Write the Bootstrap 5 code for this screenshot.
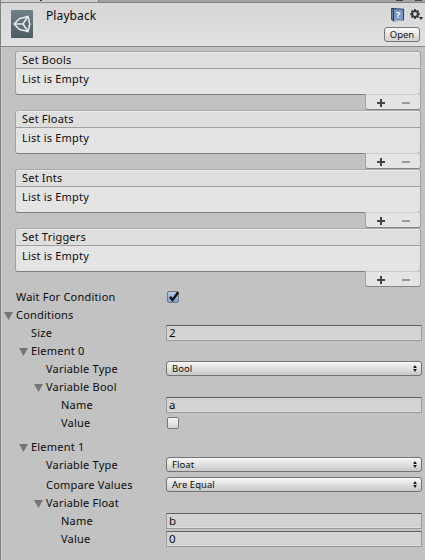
<!DOCTYPE html>
<html lang="en">
<head>
<meta charset="utf-8">
<title>Playback</title>
<link href="https://cdn.jsdelivr.net/npm/bootstrap@5.3.0/dist/css/bootstrap.min.css" rel="stylesheet">
<style>
body{background:#c2c2c2;color:#0c0c0c;font:11px/18px "Noto Sans","Open Sans",sans-serif;letter-spacing:.2px;width:425px;height:560px;overflow:hidden}
.inspector{height:560px;border-left:1px solid #828282;box-shadow:inset 1px 0 #cfcfcf}
.tabstrip{height:3px;background:#a2a2a2;border-bottom:1px solid #858585}
.tab-on{width:98px;height:2px;background:#ccc;border-right:1px solid #777}
.tab-on i{width:2px;height:1px;background:#333;margin-left:39px}
.tabstrip .tick{width:7px;height:1px;background:#444}
.tabstrip .tick+.tick{margin:0 3px 0 12px}
.asset-head{height:44px;background:linear-gradient(#d7d7d7,#e0e0e0);border-bottom:1px solid #8a8a8a}
.asset-icon{margin:7px 0 0 10px}
.asset-name{font-size:12px;margin:4px 0 0 13px;letter-spacing:.1px}
.tools{padding:5px 5px 0 0}
.tool-icons{height:17px;margin:0 -3px 2px 0}
.open-btn{width:36px;height:15px;border:1px solid #777;border-radius:3px;background:linear-gradient(#fafafa,#d0d0d0);font-size:9.5px;line-height:13px;letter-spacing:0;color:#111}
.lists{padding:4px 4px 0 14px;height:241px}
.relist{height:59px}
.list-head{height:18px;border:1px solid #a0a0a0;border-top-color:#aaa;border-radius:3px 3px 0 0;background:#dedede;box-shadow:inset 0 1px #ececec;padding-left:6px;line-height:15px}
.list-main{height:26px;border:1px solid #a0a0a0;border-top:0;border-bottom:1px solid #808080;border-radius:0 0 3px 3px;background:#e4e4e4;padding-left:6px;line-height:20px}
.list-foot{width:56px;height:16px;margin-top:-1px;padding:2px 0 0 1px;border:1px solid #a0a0a0;border-top-color:#ccc;border-bottom-color:#858585;border-radius:0 0 3px 3px;background:#e4e4e4}
.list-foot svg+svg{margin-left:-2px}
.prop{height:18px;padding-right:3px}
.prop>.lbl{width:165px;flex:none;white-space:nowrap;line-height:17px}
.lv0{padding-left:15px}.lv1{padding-left:30px}.lv2{padding-left:45px}.lv3{padding-left:60px}
.fold svg{margin-left:-12px;margin-right:3px;display:inline-block;vertical-align:-1px}
.entry{height:16px;margin-top:1px;background:#d3d3d3;border:1px solid #9b9b9b;border-top-color:#616161;box-shadow:inset 0 -1px #dfdfdf;padding-left:2px;line-height:13px;font-size:11.5px}
.popup{height:15px;margin-top:1px;border:1px solid #747474;border-radius:3px;background:linear-gradient(#f8f8f8,#c8c8c8);padding:0 4px 0 5px;font-size:9.5px;line-height:14px;letter-spacing:.05px}
.tickbox{width:12px;height:12px;margin:3px 0 0 1px;border:1px solid #777;border-radius:2px;background:linear-gradient(#f7f7f7,#d4d4d4)}
.tickbox.on{background:linear-gradient(#b4cbe8,#79a3d8)}
.tickbox svg{display:block;overflow:visible}
.gap-a{margin-top:6px}.gap-b{margin-top:2px}
</style>
<script src="https://cdn.jsdelivr.net/npm/bootstrap@5.3.0/dist/js/bootstrap.bundle.min.js"></script>
</head>
<body>
<svg class="d-none">
<symbol id="tri" viewBox="0 0 9 8"><path d="M0 0h9L4.5 8z" fill="#767676"/></symbol>
<symbol id="plus" viewBox="0 0 8 8"><path d="M3 0h2v3h3v2H5v3H3V5H0V3h3z" fill="#444"/></symbol>
<symbol id="minus" viewBox="0 0 8 8"><path d="M0 3h8v2H0z" fill="#999"/></symbol>
<symbol id="updown" viewBox="0 0 4 7"><path d="M2 0l1.800 2.900H.2zM2 7L.2 4.100h3.600z" fill="#111"/></symbol>
</svg>
<main class="inspector">
<div class="tabstrip d-flex"><div class="tab-on d-flex"><i></i></div><div class="tick ms-auto"></div><div class="tick"></div></div>
<header class="asset-head d-flex align-items-start">
<svg class="asset-icon" width="22" height="28" viewBox="0 0 22 28"><defs><linearGradient id="g" x2="0" y2="1"><stop stop-color="#708288"/><stop offset="1" stop-color="#4b5b62"/></linearGradient></defs><rect width="22" height="28" rx="1" fill="url(#g)"/><path d="M3.200 14L8.300 8.700L17 6.500L18.800 14L17 21.500L8.300 19.300z" fill="none" stroke="#e3e8e9" stroke-width="1.600"/><path d="M3.500 14H12L16.800 6.800M12 14l4.800 7.200" fill="none" stroke="#e3e8e9" stroke-width="1.700"/><path d="M8.300 11.700l3-2.400M8.300 16.300l3 2.400M16.300 11.500v5" stroke="#5d6f76" stroke-width="1"/></svg>
<div class="asset-name">Playback</div>
<div class="tools ms-auto d-flex flex-column align-items-end">
<div class="tool-icons d-flex">
<svg width="32" height="14" viewBox="0 0 32 14"><path d="M0 0h2l11 .7v11.800L2.500 13.500 0 11.500z" fill="#263d61"/><path d="M3 1.200l9 .4v9.800l-9 .9z" fill="#7698c6"/><path d="M1.200 1v10.500" stroke="#9aafce" stroke-width=".8"/><path d="M3 12.800l9-1" stroke="#e5ebf3" stroke-width=".8"/><text x="5" y="10" font-size="9" font-weight="700" fill="#fff" letter-spacing="0">?</text><g transform="translate(24 6)" stroke="#333"><circle r="2.900" fill="none" stroke-width="1.900"/><path d="M0-5v2M0 3v2M-5 0h2M3 0h2M-3.500-3.500l1.400 1.400M2.100 2.100l1.400 1.400M-3.500 3.500l1.400-1.400M2.100-2.100l1.400-1.400" stroke-width="1.700"/></g><path d="M28 9h4l-2 3z" fill="#222"/></svg>
</div>
<button class="open-btn p-0">Open</button>
</div>
</header>
<section class="lists">
<div class="relist"><div class="list-head">Set Bools</div><div class="list-main">List is Empty</div><div class="list-foot ms-auto d-flex align-items-center justify-content-around position-relative"><svg width="8" height="8"><use href="#plus"/></svg><svg width="8" height="8"><use href="#minus"/></svg></div></div>
<div class="relist"><div class="list-head">Set Floats</div><div class="list-main">List is Empty</div><div class="list-foot ms-auto d-flex align-items-center justify-content-around position-relative"><svg width="8" height="8"><use href="#plus"/></svg><svg width="8" height="8"><use href="#minus"/></svg></div></div>
<div class="relist"><div class="list-head">Set Ints</div><div class="list-main">List is Empty</div><div class="list-foot ms-auto d-flex align-items-center justify-content-around position-relative"><svg width="8" height="8"><use href="#plus"/></svg><svg width="8" height="8"><use href="#minus"/></svg></div></div>
<div class="relist"><div class="list-head">Set Triggers</div><div class="list-main">List is Empty</div><div class="list-foot ms-auto d-flex align-items-center justify-content-around position-relative"><svg width="8" height="8"><use href="#plus"/></svg><svg width="8" height="8"><use href="#minus"/></svg></div></div>
</section>
<section>
<div class="prop d-flex align-items-start"><div class="lbl lv0">Wait For Condition</div><div class="tickbox on"><svg width="10" height="10"><path d="M2 4.800L4.500 8 10.200 .3" fill="none" stroke="#111" stroke-width="2.300"/></svg></div></div>
<div class="prop d-flex"><div class="lbl lv0 fold"><svg width="9" height="8"><use href="#tri"/></svg>Conditions</div></div>
<div class="prop d-flex align-items-start"><div class="lbl lv1">Size</div><div class="entry flex-grow-1">2</div></div>
<div class="prop d-flex"><div class="lbl lv1 fold"><svg width="9" height="8"><use href="#tri"/></svg>Element 0</div></div>
<div class="prop d-flex align-items-start"><div class="lbl lv2">Variable Type</div><div class="popup flex-grow-1 d-flex align-items-center justify-content-between"><span>Bool</span><svg width="4" height="7"><use href="#updown"/></svg></div></div>
<div class="prop d-flex"><div class="lbl lv2 fold"><svg width="9" height="8"><use href="#tri"/></svg>Variable Bool</div></div>
<div class="prop d-flex align-items-start"><div class="lbl lv3">Name</div><div class="entry flex-grow-1">a</div></div>
<div class="prop d-flex align-items-start"><div class="lbl lv3">Value</div><div class="tickbox"></div></div>
<div class="prop d-flex gap-a"><div class="lbl lv1 fold"><svg width="9" height="8"><use href="#tri"/></svg>Element 1</div></div>
<div class="prop d-flex align-items-start"><div class="lbl lv2">Variable Type</div><div class="popup flex-grow-1 d-flex align-items-center justify-content-between"><span>Float</span><svg width="4" height="7"><use href="#updown"/></svg></div></div>
<div class="prop d-flex align-items-start gap-b"><div class="lbl lv2">Compare Values</div><div class="popup flex-grow-1 d-flex align-items-center justify-content-between"><span>Are Equal</span><svg width="4" height="7"><use href="#updown"/></svg></div></div>
<div class="prop d-flex"><div class="lbl lv2 fold"><svg width="9" height="8"><use href="#tri"/></svg>Variable Float</div></div>
<div class="prop d-flex align-items-start"><div class="lbl lv3">Name</div><div class="entry flex-grow-1">b</div></div>
<div class="prop d-flex align-items-start"><div class="lbl lv3">Value</div><div class="entry flex-grow-1">0</div></div>
</section>
</main>
</body>
</html>
